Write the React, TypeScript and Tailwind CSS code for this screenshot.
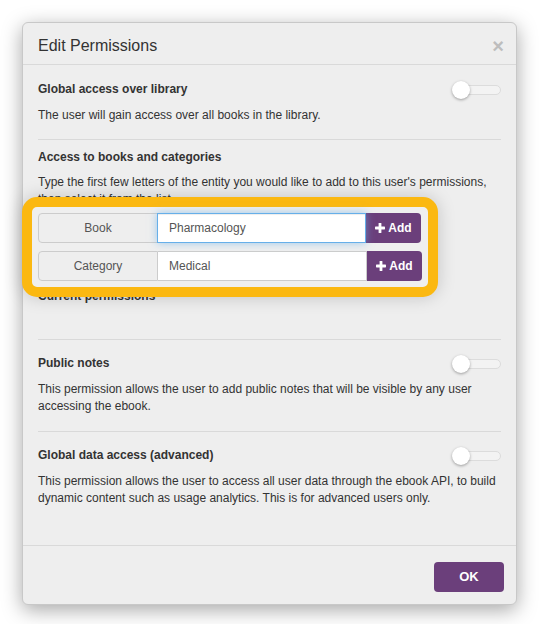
import React from "react";

function Toggle() {
  return (
    <div className="relative w-[49px] h-[18px] shrink-0">
      <div className="absolute left-0 right-0 top-[4px] h-[10px] rounded-full bg-[#f3f3f3] border border-[#dcdcdc]" />
      <div className="absolute left-0 top-0 w-[18px] h-[18px] rounded-full bg-white shadow-[0_1px_3px_rgba(0,0,0,0.35)]" />
    </div>
  );
}

function PlusIcon() {
  return (
    <svg width="10" height="10" viewBox="0 0 10 10" className="mr-[3px]">
      <rect x="3.6" y="0" width="2.8" height="10" rx="0.6" fill="white" />
      <rect x="0" y="3.6" width="10" height="2.8" rx="0.6" fill="white" />
    </svg>
  );
}

function InputRow({ label, value, focused }: { label: string; value: string; focused?: boolean }) {
  return (
    <div className="flex h-[30px]">
      <div className="w-[120px] flex items-center justify-center bg-[#eeeeee] border border-[#cccccc] rounded-l-[4px] text-[12px] text-[#555]">
        {label}
      </div>
      <div
        className={
          focused
            ? "w-[209px] flex items-center bg-white border border-[#66afe9] -ml-px px-[11px] text-[12px] text-[#555] shadow-[inset_0_1px_1px_rgba(0,0,0,0.075),0_0_8px_rgba(102,175,233,0.6)] relative z-10"
            : "w-[209px] flex items-center bg-white border border-[#cccccc] border-l-0 px-[11px] text-[12px] text-[#555]"
        }
      >
        {value}
      </div>
      <button className="w-[55px] flex items-center justify-center bg-[#6b3f7b] rounded-r-[4px] text-white text-[12px] font-bold">
        <PlusIcon />
        Add
      </button>
    </div>
  );
}

function ToggleSection({ title, text, last }: { title: string; text: string; last?: boolean }) {
  return (
    <div className={last ? "pt-[15px]" : "pt-[15px] pb-4 border-b border-[#d9d9d9]"}>
      <div className="flex items-start justify-between">
        <h3 className="font-bold text-[12px] leading-[17px] text-[#333]">{title}</h3>
        <Toggle />
      </div>
      <p className="mt-2 text-[12px] leading-[17px] text-[#333]">{text}</p>
    </div>
  );
}

export default function App() {
  return (
    <main className="min-h-screen bg-white pt-[22px]" style={{ fontFamily: '"Liberation Sans", Arial, sans-serif' }}>
      <div className="mx-auto w-[495px] bg-[#eeeeee] rounded-[6px] border border-[#c8c8c8] shadow-[0_5px_20px_rgba(0,0,0,0.35)]">
        {/* header */}
        <div className="flex items-start justify-between pl-[15px] pr-[12px] pt-[12px] pb-[7px] border-b border-[#d9d9d9]">
          <h2 className="text-[16px] leading-[22px] text-[#333]">Edit Permissions</h2>
          <span className="text-[20px] font-bold leading-[22px] text-[#bdbdbd]">×</span>
        </div>

        {/* body */}
        <div className="px-[15px] pb-[38px]">
          <div className="pt-4 pb-[15px] border-b border-[#d9d9d9]">
            <div className="flex items-start justify-between">
              <h3 className="font-bold text-[12px] leading-[17px] text-[#333]">Global access over library</h3>
              <Toggle />
            </div>
            <p className="mt-2 text-[12px] leading-[17px] text-[#333]">
              The user will gain access over all books in the library.
            </p>
          </div>

          <div className="pt-[9px] pb-[34px] border-b border-[#d9d9d9]">
            <h3 className="font-bold text-[12px] leading-[17px] text-[#333]">Access to books and categories</h3>
            <p className="mt-2 text-[12px] leading-[17px] text-[#333]">
              Type the first few letters of the entity you would like to add to this user's permissions, then select it from the list.
            </p>
            <div className="relative w-fit mt-[5px]">
              <div className="absolute -inset-[16px] rounded-[15px] border-[10px] border-[#fbb811] bg-[#efefef] shadow-[0_0_18px_rgba(0,0,0,0.18)]" />
              <div className="relative z-10 flex flex-col gap-[8px]">
                <InputRow label="Book" value="Pharmacology" focused />
                <InputRow label="Category" value="Medical" />
              </div>
            </div>
            <h3 className="mt-[7px] font-bold text-[12px] leading-[17px] text-[#333]">Current permissions</h3>
          </div>

          <ToggleSection
            title="Public notes"
            text="This permission allows the user to add public notes that will be visible by any user accessing the ebook."
          />
          <ToggleSection
            title="Global data access (advanced)"
            text="This permission allows the user to access all user data through the ebook API, to build dynamic content such as usage analytics. This is for advanced users only."
            last
          />
        </div>

        {/* footer */}
        <div className="flex justify-end px-[12px] pt-4 pb-[12px] border-t border-[#d9d9d9]">
          <button className="w-[70px] h-[30px] rounded-[4px] bg-[#6b3f7b] text-white text-[13px] font-bold">OK</button>
        </div>
      </div>
    </main>
  );
}
